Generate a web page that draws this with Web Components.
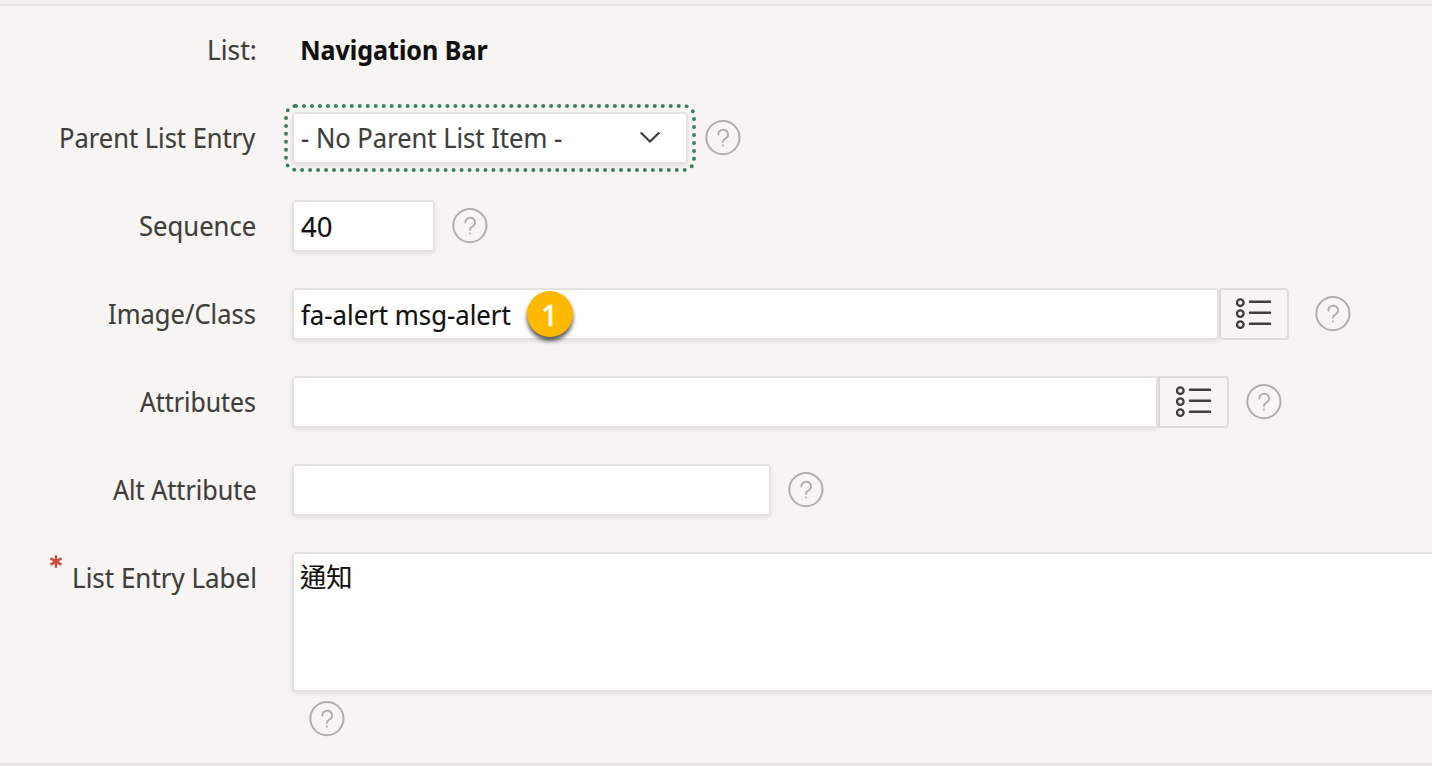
<!DOCTYPE html>
<html lang="en">
<head>
<meta charset="utf-8">
<title>List Entry</title>
<style>
html,body{margin:0;height:100%;overflow:hidden;background:#f6f5f3}
body{font-family:"Noto Sans","Noto Sans CJK TC",sans-serif;font-size:27px;color:#403e3b}
</style>
</head>
<body>
<entry-form>
  <form-row><fit-text slot="label" w="46.5">List:</fit-text><fit-text w="185.5" weight="700" style="color:#12110f;margin-left:10px">Navigation Bar</fit-text></form-row>
  <form-row><fit-text slot="label" w="194.5">Parent List Entry</fit-text><form-field kind="select" style="width:396px"><fit-text w="259.5" style="margin-left:1px">- No Parent List Item -</fit-text></form-field><help-icon style="margin-left:17px"></help-icon></form-row>
  <form-row><fit-text slot="label" w="115">Sequence</fit-text><form-field style="width:143px"><fit-text w="31">40</fit-text></form-field><help-icon style="margin-left:17px"></help-icon></form-row>
  <form-row><fit-text slot="label" w="146">Image/Class</fit-text><form-field style="width:927px"><fit-text w="210">fa-alert msg-alert</fit-text><step-badge>1</step-badge></form-field><list-button style="width:70px"></list-button><help-icon style="margin-left:26px"></help-icon></form-row>
  <form-row><fit-text slot="label" w="115">Attributes</fit-text><form-field style="width:866px;--r:4px 0 0 4px"></form-field><list-button style="width:71px;--r:0 4px 4px 0"></list-button><help-icon style="margin-left:17px"></help-icon></form-row>
  <form-row><fit-text slot="label" w="142.5">Alt Attribute</fit-text><form-field style="width:479px"></form-field><help-icon style="margin-left:17px"></help-icon></form-row>
  <form-row tall required><fit-text slot="label" w="181">List Entry Label</fit-text><form-field kind="area" style="width:1160px"><fit-text w="50.5" size="26" style="margin:-1px 0 0 -1px">通知</fit-text></form-field><help-icon style="margin:9px 0 0 17px"></help-icon></form-row>
</entry-form>
<script>
const define = (name, html, setup) => {
  const template = document.createElement('template');
  template.innerHTML = html.trim();
  customElements.define(name, class extends HTMLElement {
    constructor() {
      super();
      this.attachShadow({mode: 'open'}).append(template.content.cloneNode(true));
    }
    connectedCallback() { if (setup) setup(this, this.shadowRoot); }
  });
};

define('entry-form', `
<style>
:host{display:flex;flex-direction:column;box-sizing:border-box;width:1432px;height:766px;overflow:hidden;border-top:4px solid #f0efed;border-bottom:1px solid #f0efed}
main{flex:1;min-height:0;border-top:2px solid #e4e3e1;border-bottom:2px solid #e4e3e1;overflow:hidden}
</style><main><slot></slot></main>`);

define('form-row', `
<style>
:host{display:grid;grid-template-columns:256px auto;column-gap:36px;height:88px}
.label{display:flex;justify-content:flex-end;align-items:center;box-sizing:border-box;height:88px;padding-right:1px}
.content{display:flex;align-items:center}
.star{display:none;width:12px;height:13px;margin:0 12px 34px 0}
:host([required]) .star{display:block}
:host([tall]){height:222px}
:host([tall]) .content{flex-direction:column;align-items:flex-start;padding-top:18px}
</style>
<div class="label"><svg class="star" viewBox="0 0 12 13"><path d="M6 .2v12.6M.5 3.3l11 6.4M.5 9.7l11-6.4" fill="none" stroke="#cc4a37" stroke-width="2.4"/></svg><slot name="label"></slot></div>
<div class="content"><slot></slot></div>`);

// One line of text whose inked extent is scaled to the width in "w".
define('fit-text', `
<style>
:host{display:inline-block;flex:none;height:36px;line-height:36px;white-space:nowrap}
span{display:block;width:max-content;transform-origin:0 0;-webkit-text-stroke:.15px currentColor}
</style><span><slot></slot></span>`, (host, root) => {
  const size = host.getAttribute('size') || 27;
  const weight = host.getAttribute('weight') || 400;
  const width = +host.getAttribute('w');
  host.style.width = width + 'px';
  host.style.fontSize = size + 'px';
  host.style.fontWeight = weight;
  const ctx = document.createElement('canvas').getContext('2d');
  ctx.font = `${weight} ${size}px "Noto Sans","Noto Sans CJK TC",sans-serif`;
  const m = ctx.measureText(host.textContent);
  const k = width / (m.actualBoundingBoxRight + m.actualBoundingBoxLeft);
  root.querySelector('span').style.transform = `translateX(${m.actualBoundingBoxLeft * k}px) scaleX(${k})`;
});

define('form-field', `
<style>
:host{display:flex;flex:none;align-items:center;position:relative;box-sizing:border-box;height:52px;padding:2px 0 0 7px;background:#fff;border:2px solid #e5e2df;border-radius:var(--r,4px);box-shadow:0 2px 4px rgba(0,0,0,.08);color:#12110f}
:host([kind=select]){padding-top:0;color:#403e3b;outline:4px dotted #3a8158;outline-offset:4px}
:host([kind=area]){height:140px;align-items:flex-start;padding-top:6px}
svg{display:none;margin:0 25px 2px auto}
:host([kind=select]) svg{display:block}
</style><slot></slot>
<svg width="22" height="12" viewBox="0 0 22 12"><path d="M1.7 1.5l9.3 9 9.3-9" fill="none" stroke="#403e3b" stroke-width="2.2"/></svg>`);

define('list-button', `
<style>
:host{display:flex;flex:none;align-items:center;justify-content:center;box-sizing:border-box;height:52px;padding:0 0 1px 0;border:2px solid #dfdddb;border-radius:var(--r,4px)}
</style>
<svg width="36" height="32" viewBox="0 0 36 32" fill="none" stroke="#403e3b" stroke-linecap="round">
<g stroke-width="2.3"><circle cx="4.3" cy="4.7" r="3.3"/><circle cx="4.3" cy="15.6" r="3.3"/><circle cx="4.3" cy="26.6" r="3.3"/></g>
<path stroke-width="2.5" d="M14 3.7h20M14 14.7h20M14 25.7h20"/></svg>`);

define('help-icon', `
<style>:host{display:block;flex:none;width:36px;height:36px}svg{display:block}</style>
<svg width="36" height="36" viewBox="0 0 36 36" fill="none" stroke="#b0aeac">
<circle cx="17.9" cy="17.6" r="16.6" stroke-width="2"/>
<path d="M13.4 14.5a4.8 4.6 0 1 1 7.3 3.8c-1.8 1.1-2.8 1.5-2.8 3.6" stroke-width="1.9" stroke-linecap="round"/>
<circle cx="17.9" cy="25.5" r="1.1" fill="#b0aeac" stroke="none"/></svg>`);

define('step-badge', `
<style>
:host{position:absolute;left:233px;top:1px;width:46px;height:46px;border-radius:50%;background:#fcb900;box-shadow:0 4px 4px rgba(0,0,0,.65);color:#fff;font:500 29px/48px "Noto Sans",sans-serif;-webkit-text-stroke:.4px #fff;text-align:center;text-indent:-1px}
</style><slot></slot>`);
</script>
</body>
</html>
